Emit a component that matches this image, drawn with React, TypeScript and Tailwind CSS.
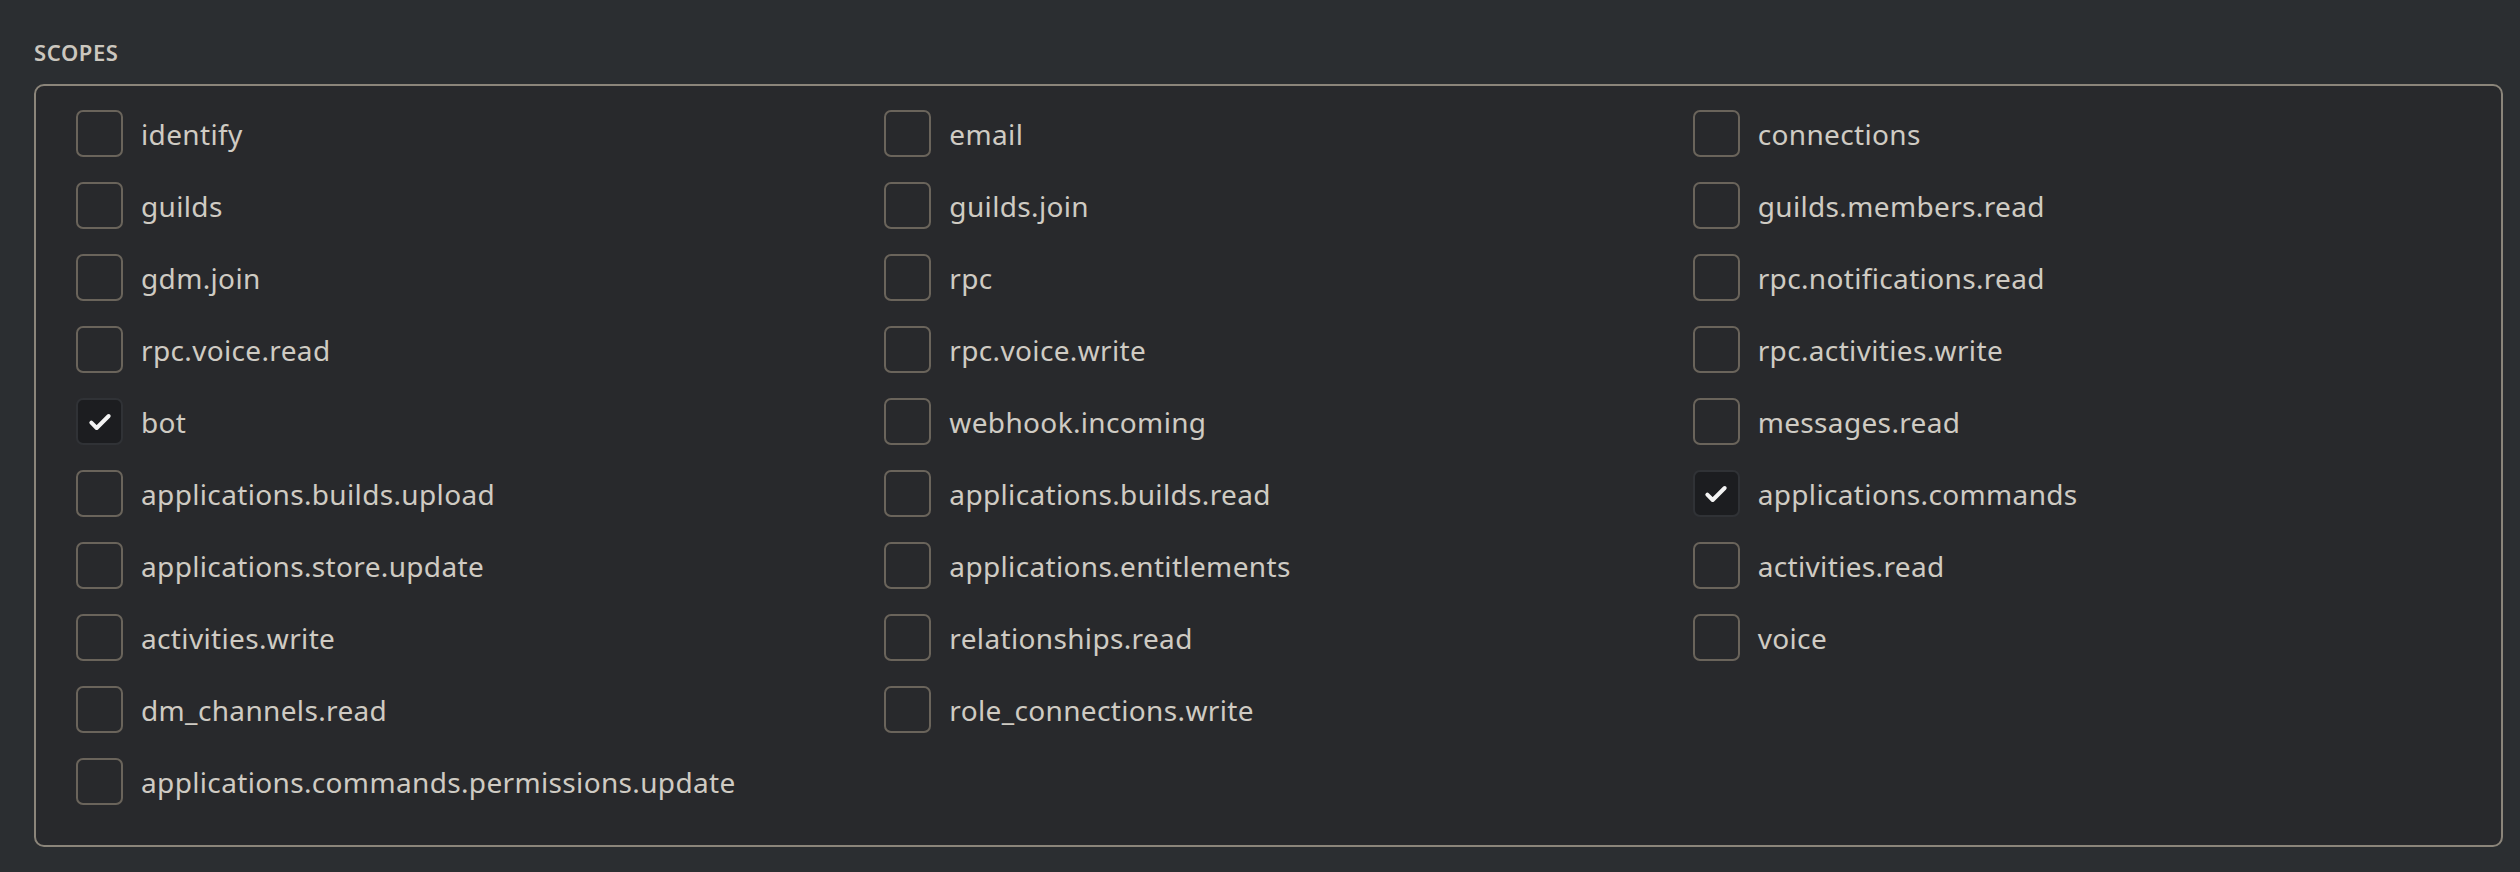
import React from "react";

const scopes: { label: string; checked?: boolean }[] = [
  { label: "identify" },
  { label: "email" },
  { label: "connections" },
  { label: "guilds" },
  { label: "guilds.join" },
  { label: "guilds.members.read" },
  { label: "gdm.join" },
  { label: "rpc" },
  { label: "rpc.notifications.read" },
  { label: "rpc.voice.read" },
  { label: "rpc.voice.write" },
  { label: "rpc.activities.write" },
  { label: "bot", checked: true },
  { label: "webhook.incoming" },
  { label: "messages.read" },
  { label: "applications.builds.upload" },
  { label: "applications.builds.read" },
  { label: "applications.commands", checked: true },
  { label: "applications.store.update" },
  { label: "applications.entitlements" },
  { label: "activities.read" },
  { label: "activities.write" },
  { label: "relationships.read" },
  { label: "voice" },
  { label: "dm_channels.read" },
  { label: "role_connections.write" },
  { label: "" },
  { label: "applications.commands.permissions.update" },
];

function Box({ checked }: { checked?: boolean }) {
  if (checked) {
    return (
      <div className="flex h-[47px] w-[47px] shrink-0 items-center justify-center rounded-[7px] border-2 border-[#303236] bg-[#1c1d20]">
        <svg width="32" height="32" viewBox="0 0 24 24" fill="none">
          <path d="M5.5 12.5l4 4L18.5 7.5" stroke="#f4f4f4" strokeWidth="3" strokeLinecap="round" strokeLinejoin="round" />
        </svg>
      </div>
    );
  }
  return <div className="h-[47px] w-[47px] shrink-0 rounded-[7px] border-2 border-[#6a645b]" />;
}

export default function App() {
  return (
    <div
      className="h-[872px] w-full bg-[#2b2e31] pt-[38px]"
      style={{ fontFamily: '"Noto Sans", "Open Sans", sans-serif' }}
    >
      <div className="ml-[34px] text-[22px] font-semibold leading-[28px] tracking-[0.6px] text-[#cbc7bf]">SCOPES</div>
      <div className="ml-[34px] mr-[17px] mt-[18px] rounded-[10px] border-2 border-[#8b857a] bg-[#28292c] pb-[40px] pl-[40px] pt-[24px]">
        <div className="grid grid-cols-3 gap-y-[25px]">
          {scopes.map((s, i) =>
            s.label === "" ? (
              <div key={i} />
            ) : (
              <div key={i} className="flex h-[47px] items-center gap-[18px]">
                <Box checked={s.checked} />
                <span className="text-[28px] leading-none tracking-[0.35px] text-[#cfcbc3]">{s.label}</span>
              </div>
            )
          )}
        </div>
      </div>
    </div>
  );
}
